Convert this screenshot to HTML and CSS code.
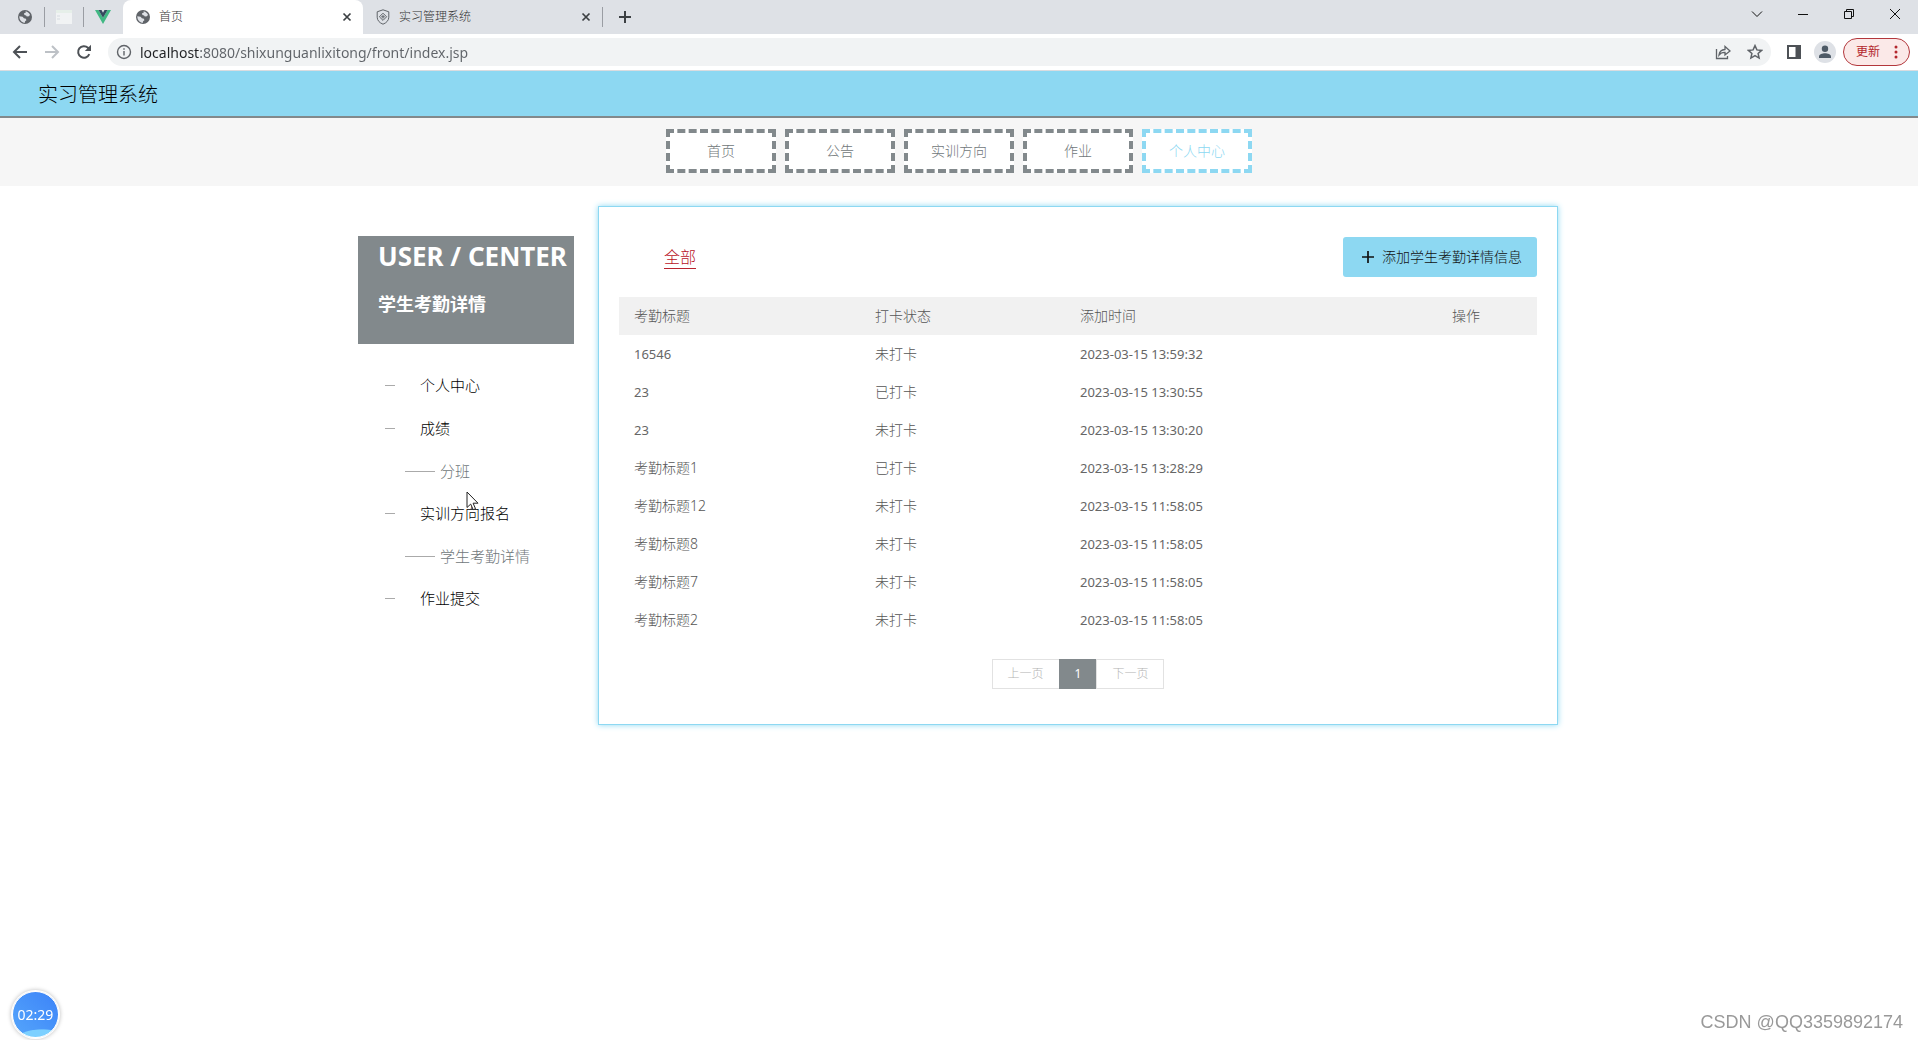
FILE: index.html
```html
<!DOCTYPE html>
<html lang="zh-CN">
<head>
<meta charset="utf-8">
<title>首页</title>
<meta name="viewport" content="width=device-width, initial-scale=1">
<link rel="stylesheet" href="styles.css">
</head>
<body>
<svg width="0" height="0" class="defs" aria-hidden="true">
  <symbol id="globe" viewBox="0 0 16 16">
    <circle cx="8" cy="8" r="7" fill="#5f6368"/>
    <path d="M8.6 2.3c1.700.3 3.600 1.600 4.400 3.400L12 7.300l-2.200.3-.7-1.200-1.700-.5-.4-1.700 1.700-.5zM2.300 7.200l3.300.6 1.300 1.500 2 .4.5 1.600-1.300.9-.2 1.600C5 13.800 2.200 11 2.300 7.200z" fill="#dee1e6"/>
  </symbol>
  <symbol id="cross" viewBox="0 0 16 16">
    <path d="M4.500 4.500l7 7M11.500 4.500l-7 7" fill="none" stroke="#3c4043" stroke-width="1.700"/>
  </symbol>
</svg>

<div class="browser">
  <div class="tabstrip">
    <div class="pinned"><svg class="icon"><use href="#globe"/></svg></div>
    <div class="pinned"><svg class="icon" viewBox="0 0 16 16"><path d="M0 1h16v14H0z" fill="#f1f3f4"/><path d="M0 1h16v3H0z" fill="#e6efe9"/><path d="M1 7h3M1 10h3" stroke="#d5dbe0"/></svg></div>
    <div class="pinned"><svg class="icon" viewBox="0 0 16 16"><path d="M0 1h3.500L8 8.800 12.500 1H16L8 15z" fill="#41b883"/><path d="M3.500 1h3L8 3.700 9.500 1h3L8 8.800z" fill="#35495e"/></svg></div>
    <div class="tab tab-active">
      <svg class="icon"><use href="#globe"/></svg>
      <span class="tab-title">首页</span>
      <button class="tab-close" aria-label="关闭标签页"><svg class="icon"><use href="#cross"/></svg></button>
    </div>
    <div class="tab">
      <svg class="icon" viewBox="0 0 16 16" fill="none" stroke="#5f6368"><path d="M8 .8l5.800 2v5.400c0 3.200-2.400 5.700-5.800 7-3.400-1.300-5.800-3.800-5.800-7V2.800z"/><path d="M8 4.200l3.600 3.600L8 11.400 4.400 7.800z"/><path d="M8 6v3.600M6.200 7.800h3.600"/></svg>
      <span class="tab-title">实习管理系统</span>
      <button class="tab-close" aria-label="关闭标签页"><svg class="icon"><use href="#cross"/></svg></button>
    </div>
    <button class="new-tab" aria-label="新标签页"><svg class="icon" viewBox="0 0 16 16"><path d="M8 2v12M2 8h12" stroke="#3c4043" stroke-width="2"/></svg></button>
    <div class="window-buttons">
      <button aria-label="搜索标签页"><svg viewBox="0 0 12 12"><path d="M1 3.500l5 5 5-5"/></svg></button>
      <button aria-label="最小化"><svg viewBox="0 0 12 12"><path d="M1 6.500h10"/></svg></button>
      <button aria-label="还原"><svg viewBox="0 0 12 12"><path d="M1.500 3.500h7v7h-7zM3.500 3.500v-2h7v7h-2"/></svg></button>
      <button aria-label="关闭"><svg viewBox="0 0 12 12"><path d="M1 1l10 10M11 1L1 11"/></svg></button>
    </div>
  </div>
  <div class="toolbar">
    <button class="tool" aria-label="后退"><svg class="icon" viewBox="0 0 16 16"><path d="M15 8H2.500M8 2L2 8l6 6" fill="none" stroke="#4d5156" stroke-width="2"/></svg></button>
    <button class="tool" aria-label="前进"><svg class="icon" viewBox="0 0 16 16"><path d="M1 8h12.500M8 2l6 6-6 6" fill="none" stroke="#bdc1c6" stroke-width="2"/></svg></button>
    <button class="tool" aria-label="重新加载"><svg class="icon" viewBox="0 0 16 16"><path d="M13.300 10.200A5.800 5.800 0 1 1 12 3.800L13.500 5.300" fill="none" stroke="#4d5156" stroke-width="2"/><path d="M15 .8v6.200H8.800z" fill="#4d5156"/></svg></button>
    <div class="address">
      <svg class="icon" viewBox="0 0 16 16" fill="none" stroke="#5f6368" stroke-width="1.400"><circle cx="8" cy="8" r="6.500"/><path d="M8 7v4.500M8 4.200v1.600"/></svg>
      <input class="url" type="text" aria-label="地址" value="localhost:8080/shixunguanlixitong/front/index.jsp">
      <button class="tool" aria-label="分享"><svg class="icon" viewBox="0 0 16 16" fill="none" stroke="#5f6368" stroke-width="1.300"><path d="M1.500 5v9.500h11V12"/><path d="M4 11c.5-3.800 2.500-5.300 6-5.500V2.500L15 7l-5 4V8.300C7.200 8.200 5.500 9 4 11z"/></svg></button>
      <button class="tool" aria-label="收藏"><svg class="icon" viewBox="0 0 16 16"><path d="M8 1.600l1.900 4.300 4.700.5-3.500 3.100 1 4.600L8 11.700l-4.100 2.400 1-4.600L1.400 6.400l4.700-.5z" fill="none" stroke="#5f6368" stroke-width="1.500"/></svg></button>
    </div>
    <button class="tool tool-side" aria-label="侧边栏"><svg class="icon" viewBox="0 0 16 16"><path d="M2 2h12v12H2z" fill="none" stroke="#4d5156" stroke-width="2"/><path d="M9.500 1H15v14H9.500z" fill="#4d5156"/></svg></button>
    <button class="avatar" aria-label="个人资料"><svg class="icon" viewBox="0 0 16 16" fill="#4d5a66"><circle cx="8" cy="4.700" r="3.200"/><path d="M2 14v-1.500C2 10.300 5.500 9.300 8 9.300s6 1 6 3.200V14z"/></svg></button>
    <button class="update">更新<svg viewBox="0 0 4 16" class="dots"><circle cx="2" cy="3" r="1.500"/><circle cx="2" cy="8" r="1.500"/><circle cx="2" cy="13" r="1.500"/></svg></button>
  </div>
</div>

<header class="site-header"><h1>实习管理系统</h1></header>
<nav class="site-nav" aria-label="主导航">
  <a href="#">首页</a>
  <a href="#">公告</a>
  <a href="#">实训方向</a>
  <a href="#">作业</a>
  <a href="#" class="active">个人中心</a>
</nav>

<main class="container">
  <aside class="sidebar">
    <div class="sidebar-title">
      <h2>USER / CENTER</h2>
      <h3>学生考勤详情</h3>
    </div>
    <ul class="menu">
      <li><a href="#">个人中心</a></li>
      <li><a href="#">成绩</a></li>
      <li class="sub"><a href="#">分班</a></li>
      <li><a href="#">实训方向报名</a></li>
      <li class="sub"><a href="#">学生考勤详情</a></li>
      <li><a href="#">作业提交</a></li>
    </ul>
  </aside>

  <section class="panel">
    <div class="panel-head">
      <a href="#" class="filter">全部</a>
      <button class="add"><svg class="icon" viewBox="0 0 16 16"><path d="M8 2v12M2 8h12" stroke="currentColor" stroke-width="1.700"/></svg>添加学生考勤详情信息</button>
    </div>
    <table class="records">
      <colgroup><col class="col-title"><col class="col-state"><col class="col-time"><col class="col-action"></colgroup>
      <thead><tr><th>考勤标题</th><th>打卡状态</th><th>添加时间</th><th>操作</th></tr></thead>
      <tbody>
        <tr><td class="num">16546</td><td>未打卡</td><td class="num">2023-03-15 13:59:32</td><td></td></tr>
        <tr><td class="num">23</td><td>已打卡</td><td class="num">2023-03-15 13:30:55</td><td></td></tr>
        <tr><td class="num">23</td><td>未打卡</td><td class="num">2023-03-15 13:30:20</td><td></td></tr>
        <tr><td>考勤标题1</td><td>已打卡</td><td class="num">2023-03-15 13:28:29</td><td></td></tr>
        <tr><td>考勤标题12</td><td>未打卡</td><td class="num">2023-03-15 11:58:05</td><td></td></tr>
        <tr><td>考勤标题8</td><td>未打卡</td><td class="num">2023-03-15 11:58:05</td><td></td></tr>
        <tr><td>考勤标题7</td><td>未打卡</td><td class="num">2023-03-15 11:58:05</td><td></td></tr>
        <tr><td>考勤标题2</td><td>未打卡</td><td class="num">2023-03-15 11:58:05</td><td></td></tr>
      </tbody>
    </table>
    <div class="pager">
      <button disabled>上一页</button><button class="current">1</button><button disabled>下一页</button>
    </div>
  </section>
</main>

<div class="timer">02:29</div>
<div class="watermark">CSDN @QQ3359892174</div>
<svg class="pointer" viewBox="0 0 14 20" aria-hidden="true"><path d="M1 1v15.500l3.700-3.400 2.500 5.600 2.300-1-2.400-5.500H12z" fill="#fff" stroke="#222"/></svg>
</body>
</html>
```
FILE: styles.css
```css
* { box-sizing: border-box; }

body {
  margin: 0;
  min-height: 100vh;
  position: relative;
  background: #fff;
  color: #555;
  font: 300 14px/24px "Noto Sans", "Noto Sans CJK SC", sans-serif;
}

h1, h2, h3, ul { margin: 0; padding: 0; }
ul { list-style: none; }
a { color: inherit; text-decoration: none; }
button { border: 0; padding: 0; background: none; color: inherit; font: inherit; }
svg { display: block; flex: none; }
.defs { position: absolute; }
.icon { width: 16px; height: 16px; }

/* browser window */
.tabstrip {
  display: flex;
  align-items: center;
  height: 34px;
  padding-left: 6px;
  background: #dee1e6;
}
.pinned {
  display: flex;
  justify-content: center;
  width: 39px;
  height: 20px;
  align-items: center;
  border-right: 1px solid #9a9da3;
}
.pinned:nth-child(3) { border-right-color: transparent; }
.tab {
  display: flex;
  align-items: center;
  gap: 8px;
  width: 240px;
  height: 20px;
  padding: 0 8px 0 12px;
  border-right: 1px solid #9a9da3;
  color: #333;
  font-size: 12px;
}
.tab-active {
  height: 34px;
  border: 0;
  border-radius: 8px 8px 0 0;
  background: #fff;
}
.tab-title { flex: 1; }
.new-tab { padding: 0 14px; }
.window-buttons { display: flex; height: 28px; margin: 0 0 6px auto; }
.window-buttons button { display: grid; place-items: center; width: 46px; }
.window-buttons svg { width: 12px; height: 12px; fill: none; stroke: #111; }

.toolbar {
  display: flex;
  align-items: center;
  height: 37px;
  padding: 0 8px 0 4px;
  border-bottom: 1px solid #dadce0;
}
.tool { display: grid; place-items: center; width: 32px; height: 28px; }
.address {
  display: flex;
  flex: 1;
  align-items: center;
  height: 28px;
  margin-left: 8px;
  padding: 0 0 0 8px;
  border-radius: 14px;
  background: #f1f3f4;
}
.url {
  flex: 1;
  height: 28px;
  padding: 0;
  margin-left: 8px;
  border: 0;
  outline: 0;
  color: #5f6368;
  font: inherit;
  font-weight: 400;
  background: linear-gradient(to right, #202124 60px, #5f6368 60px);
  background-clip: text;
  -webkit-text-fill-color: transparent;
}
.tool-side { margin: 0 4px 0 7px; }
.avatar {
  display: grid;
  place-items: center;
  width: 22px;
  height: 22px;
  margin-right: 7px;
  border-radius: 50%;
  background: #dee1e6;
}
.update {
  display: flex;
  align-items: center;
  justify-content: space-between;
  width: 67px;
  height: 28px;
  padding: 0 11px 0 12px;
  border: 1px solid #b3373c;
  border-radius: 14px;
  background: #fbe9e8;
  color: #b3272d;
  font-size: 12px;
  font-weight: 400;
}
.dots { width: 4px; height: 16px; fill: currentColor; }

/* site header */
.site-header {
  display: flex;
  align-items: center;
  height: 47px;
  padding: 2px 38px 0;
  border-bottom: 2px solid #82898c;
  background: #8dd8f2;
}
.site-header h1 { color: #000; font-size: 20px; font-weight: 300; }
.site-nav {
  display: flex;
  justify-content: center;
  gap: 9px;
  padding: 11px 0 13px;
  background: #f6f6f6;
}
.site-nav a {
  width: 110px;
  height: 44px;
  border: 4px dashed #82898c;
  background: #fff;
  color: #70777a;
  line-height: 36px;
  text-align: center;
}
.site-nav .active { border-color: #8dd8f2; color: #8dd8f2; }

/* content */
.container {
  display: flex;
  align-items: flex-start;
  gap: 24px;
  max-width: 1202px;
  margin: 20px auto 0;
  padding-right: 2px;
}
.sidebar { width: 216px; margin-top: 30px; }
.sidebar-title {
  height: 108px;
  padding: 2px 0 0 20px;
  background: #82898c;
  color: #fff;
  white-space: nowrap;
}
.sidebar-title h2 { font-size: 26px; line-height: 36px; }
.sidebar-title h3 { margin-top: 18px; font-size: 18px; line-height: 24px; }
.menu { padding: 20px 0 0 27px; font-size: 15px; }
.menu a { display: flex; align-items: center; gap: 25px; color: #000; line-height: 43px; }
.menu a::before { content: ""; width: 10px; height: 1px; background: #aaa; }
.menu .sub { padding-left: 20px; }
.menu .sub a { gap: 5px; color: #70777a; line-height: 42px; }
.menu .sub a::before { width: 30px; }

.panel {
  flex: 1;
  padding: 30px 20px 35px;
  border: 1px solid #8dd8f2;
  box-shadow: 0 0 6px #8dd8f2;
}
.panel-head { display: flex; align-items: center; justify-content: space-between; }
.filter {
  margin-left: 45px;
  border-bottom: 1px solid #b8232f;
  color: #b8121f;
  font-size: 16px;
  line-height: 22px;
}
.add {
  display: flex;
  align-items: center;
  gap: 6px;
  height: 40px;
  padding: 0 15px 0 17px;
  border-radius: 3px;
  background: #8dd8f2;
  color: #111;
}
.records {
  width: 100%;
  margin-top: 20px;
  border-collapse: collapse;
  table-layout: fixed;
}
.col-title { width: 241px; }
.col-state { width: 205px; }
.col-action { width: 100px; }
.records tr { height: 38px; }
.records thead { background: #f1f1f1; }
.records th, .records td { padding: 0 15px; font-weight: 300; text-align: left; }
.records .num { font-size: 13px; font-weight: 400; color: #666; }
.pager { display: flex; justify-content: center; margin-top: 20px; }
.pager button {
  height: 30px;
  padding: 0 15px;
  border: 1px solid #e2e2e2;
  color: #b4b4b4;
  font-size: 12px;
}
.pager .current {
  margin: 0 -1px;
  border-color: #82898c;
  background: #82898c;
  color: #fff;
  font-weight: 400;
}

/* overlays */
.timer {
  position: fixed;
  left: 12px;
  bottom: 2px;
  width: 47px;
  height: 47px;
  border: 1px solid #fff;
  border-radius: 50%;
  background: radial-gradient(ellipse 24px 8px at 65% 100%, #7cd0ff 0 90%, transparent), linear-gradient(45deg, #55a6fb, #3c83f8);
  box-shadow: 0 0 0 1px #fff, 0 0 4px 1px #bbb;
  color: #fff;
  font-weight: 400;
  line-height: 45px;
  text-align: center;
}
.watermark {
  position: fixed;
  right: 15px;
  bottom: 6px;
  color: #999;
  font: 18px/24px "Liberation Sans", sans-serif;
}
.pointer { position: absolute; left: 466px; top: 491px; width: 14px; height: 20px; }
```
